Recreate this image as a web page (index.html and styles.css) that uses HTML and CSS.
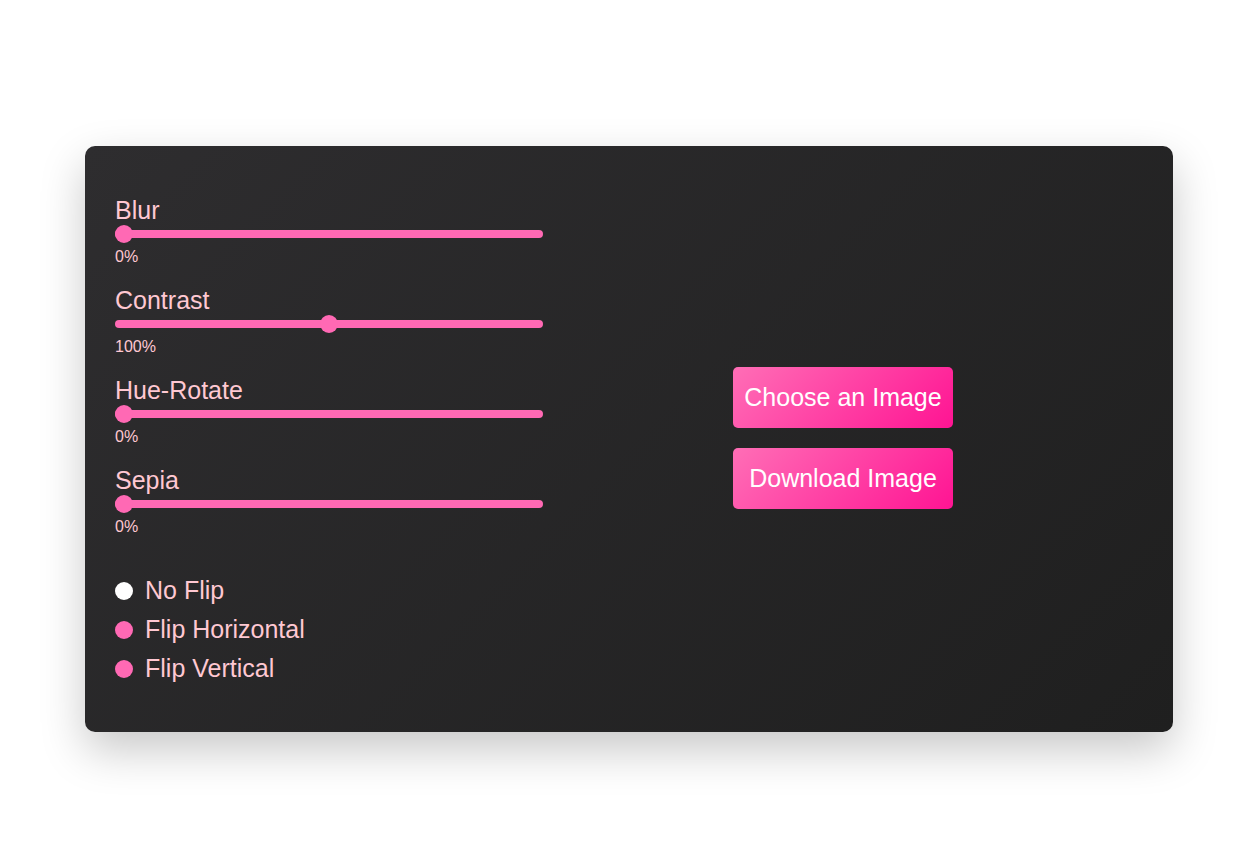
FILE: index.html
```html
<!DOCTYPE html>
<html lang="en">
<head>
<meta charset="utf-8">
<title>Image Editor</title>
<link rel="stylesheet" href="styles.css">
</head>
<body>
<div class="page">
  <div class="card">
    <div class="controls">
      <div class="group">
        <label class="label" for="blur">Blur</label>
        <input class="range" id="blur" type="range" min="0" max="100" value="0">
        <div class="value">0%</div>
      </div>
      <div class="group">
        <label class="label" for="contrast">Contrast</label>
        <input class="range" id="contrast" type="range" min="0" max="200" value="100">
        <div class="value">100%</div>
      </div>
      <div class="group">
        <label class="label" for="hue">Hue-Rotate</label>
        <input class="range" id="hue" type="range" min="0" max="360" value="0">
        <div class="value">0%</div>
      </div>
      <div class="group">
        <label class="label" for="sepia">Sepia</label>
        <input class="range" id="sepia" type="range" min="0" max="100" value="0">
        <div class="value">0%</div>
      </div>
      <div class="flips">
        <label class="flip"><input class="radio" type="radio" name="flip" checked><span>No Flip</span></label>
        <label class="flip"><input class="radio" type="radio" name="flip"><span>Flip Horizontal</span></label>
        <label class="flip"><input class="radio" type="radio" name="flip"><span>Flip Vertical</span></label>
      </div>
    </div>
    <div class="actions">
      <button class="btn" type="button">Choose an Image</button>
      <button class="btn" type="button">Download Image</button>
    </div>
  </div>
</div>
</body>
</html>
```
FILE: styles.css
```css
* { box-sizing: border-box; }
html, body { margin: 0; padding: 0; background: #ffffff; }
body { font-family: "Liberation Sans", Arial, sans-serif; }

.page {
  padding: 146px 0 0 85px;
  min-height: 865px;
}

.card {
  width: 1088px;
  display: flex;
  padding: 50px 30px 49px;
  border-radius: 10px;
  background: linear-gradient(135deg, #2e2d2f 0%, #1f1f1f 100%);
  box-shadow: 0 18px 45px rgba(0, 0, 0, 0.22);
}

.controls {
  width: 428px;
  display: flex;
  flex-direction: column;
}

.group {
  display: flex;
  flex-direction: column;
  margin-bottom: 20px;
}

.label {
  font-size: 25px;
  line-height: 28px;
  height: 28px;
  color: #ffc8d2;
}

.range {
  -webkit-appearance: none;
  appearance: none;
  display: block;
  width: 428px;
  height: 18px;
  margin: 1px 0 0;
  padding: 0;
  background: transparent;
}
.range::-webkit-slider-runnable-track {
  height: 8px;
  border-radius: 4px;
  background: #ff69b4;
}
.range::-webkit-slider-thumb {
  -webkit-appearance: none;
  appearance: none;
  width: 18px;
  height: 18px;
  margin-top: -5px;
  border-radius: 50%;
  background: #ff69b4;
  border: none;
}
.range::-moz-range-track {
  height: 8px;
  border-radius: 4px;
  background: #ff69b4;
}
.range::-moz-range-thumb {
  width: 18px;
  height: 18px;
  border-radius: 50%;
  background: #ff69b4;
  border: none;
}

.value {
  margin-top: 5px;
  font-size: 16px;
  line-height: 18px;
  color: #ffc8d2;
}

.flips {
  margin-top: 20px;
  display: flex;
  flex-direction: column;
  gap: 10px;
}

.flip {
  display: flex;
  align-items: center;
  gap: 12px;
  height: 29px;
  font-size: 25px;
  line-height: 29px;
  color: #ffc8d2;
}

.radio {
  -webkit-appearance: none;
  appearance: none;
  width: 18px;
  height: 18px;
  margin: 0;
  border-radius: 50%;
  background: #ff69b4;
  border: none;
  flex: none;
}
.radio:checked { background: #ffffff; }

.actions {
  flex: 1;
  display: flex;
  flex-direction: column;
  align-items: center;
  justify-content: center;
  gap: 20px;
  padding-bottom: 4px;
}

.btn {
  width: 220px;
  height: 61px;
  border: none;
  border-radius: 5px;
  background: linear-gradient(135deg, #ff6eb6 0%, #ff1493 100%);
  color: #ffffff;
  font-family: "Liberation Sans", Arial, sans-serif;
  font-size: 25px;
  padding: 0;
  cursor: pointer;
}
```
